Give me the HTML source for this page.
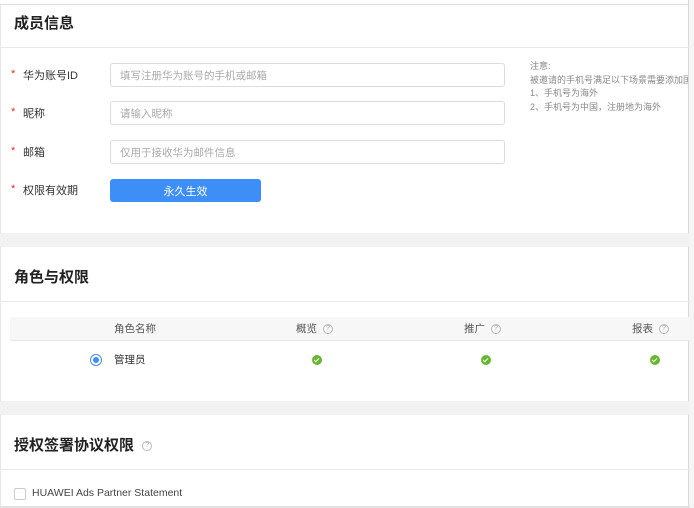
<!DOCTYPE html>
<html><head><meta charset="utf-8"><style>
*{margin:0;padding:0;box-sizing:border-box}
body{width:694px;height:508px;background:#fff;font-family:"Liberation Sans","Noto Sans CJK SC",sans-serif;position:relative;overflow:hidden;color:#333}
.a{position:absolute}
.t{font-size:15px;font-weight:bold;color:#222}
.lbl{font-size:11px;color:#333}
.st{color:#e0312f;font-size:11px}
.in{border:1px solid #dcdcdc;border-radius:3px;height:24px;width:395px;left:110px;font-size:10.5px;color:#aaa;padding:0 9px;display:flex;align-items:center}
.hr{height:1px;background:#e8e8e8}
.band{background:#f2f2f2;left:0;width:690px}
.q{display:inline-block;width:10px;height:10px;border:1px solid #bbb;border-radius:50%;font-size:7px;line-height:8px;text-align:center;color:#aaa;vertical-align:middle;margin-left:6px}
.ok{width:10px;height:10px;border-radius:50%;background:#67b631}
.ok:after{content:"";position:absolute;left:3px;top:2px;width:2px;height:4px;border:solid #fff;border-width:0 1.3px 1.3px 0;transform:rotate(45deg)}
</style></head><body>
<div class="a" style="left:0;top:4px;width:690px;height:1px;background:#ddd"></div>
<div class="a" style="left:688px;top:0;width:6px;height:508px;background:#d9d9d9"></div>
<div class="a" style="left:689px;top:0;width:5px;height:508px;background:#f5f5f5"></div>
<div class="a" style="left:0;top:4px;width:1px;height:504px;background:#e6e6e6"></div>
<div class="a t" style="left:14px;top:12px">成员信息</div>
<div class="a hr" style="left:0;top:47px;width:690px"></div>

<div class="a st" style="left:11px;top:68px">*</div><div class="a lbl" style="left:23px;top:67px">华为账号ID</div>
<div class="a in" style="top:63px">填写注册华为账号的手机或邮箱</div>
<div class="a st" style="left:11px;top:106px">*</div><div class="a lbl" style="left:23px;top:105px">昵称</div>
<div class="a in" style="top:101px">请输入昵称</div>
<div class="a st" style="left:11px;top:145px">*</div><div class="a lbl" style="left:23px;top:144px">邮箱</div>
<div class="a in" style="top:140px">仅用于接收华为邮件信息</div>
<div class="a st" style="left:11px;top:183px">*</div><div class="a lbl" style="left:23px;top:182px">权限有效期</div>
<div class="a" style="left:110px;top:179px;width:151px;height:23px;background:#3e8ef7;border-radius:3px;color:#fff;font-size:11px;display:flex;align-items:center;justify-content:center">永久生效</div>
<div class="a" style="left:530px;top:60px;font-size:9px;color:#888;line-height:13.5px;white-space:nowrap;width:158px;overflow:hidden">注意:<br>被邀请的手机号满足以下场景需要添加国家码<br>1、手机号为海外<br>2、手机号为中国，注册地为海外</div>

<div class="a band" style="top:233px;height:14px"></div>
<div class="a t" style="left:14px;top:266px">角色与权限</div>
<div class="a hr" style="left:0;top:301px;width:690px"></div>
<div class="a" style="left:10px;top:317px;width:680px;height:24px;background:#f7f7f7;border-bottom:1px solid #e8e8e8"></div>
<div class="a lbl" style="left:114px;top:321px;font-size:10.5px;color:#555">角色名称</div>
<div class="a lbl" style="left:296px;top:321px;font-size:10.5px;color:#555">概览<span class="q">?</span></div>
<div class="a lbl" style="left:464px;top:321px;font-size:10.5px;color:#555">推广<span class="q">?</span></div>
<div class="a lbl" style="left:632px;top:321px;font-size:10.5px;color:#555">报表<span class="q">?</span></div>
<div class="a" style="left:90px;top:354px;width:12px;height:12px;border:1px solid #3e8ef7;border-radius:50%"></div>
<div class="a" style="left:93px;top:357px;width:6px;height:6px;background:#3e8ef7;border-radius:50%"></div>
<div class="a lbl" style="left:114px;top:352px;font-size:10.5px">管理员</div>
<div class="a ok" style="left:312px;top:355px"></div>
<div class="a ok" style="left:481px;top:355px"></div>
<div class="a ok" style="left:650px;top:355px"></div>

<div class="a band" style="top:401px;height:14px"></div>
<div class="a t" style="left:14px;top:434px">授权签署协议权限<span class="q" style="margin-left:8px;font-weight:normal">?</span></div>
<div class="a hr" style="left:0;top:469px;width:690px"></div>
<div class="a" style="left:14px;top:488px;width:12px;height:12px;border:1px solid #ccc;border-radius:2px"></div>
<div class="a" style="left:32px;top:487px;font-size:10.5px;color:#444">HUAWEI Ads Partner Statement</div>
<div class="a" style="left:0;top:506px;width:690px;height:2px;background:#e0e0e0"></div>
</body></html>
